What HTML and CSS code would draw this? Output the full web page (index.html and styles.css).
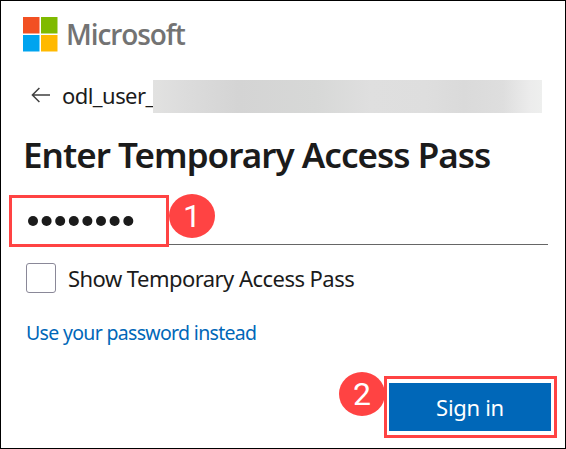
FILE: index.html
```html
<!DOCTYPE html>
<html lang="en">
<head>
<meta charset="utf-8">
<title>Enter Temporary Access Pass</title>
<link rel="stylesheet" href="styles.css">
</head>
<body>
<main class="card">
  <div class="brand">
    <svg class="brand-mark" viewBox="0 0 35 35" aria-hidden="true">
      <path fill="#f25022" d="M0 0h16.5v16.5H0z"/>
      <path fill="#7fba00" d="M18 0h16.5v16.5H18z"/>
      <path fill="#00a4ef" d="M0 18h16.5v16.5H0z"/>
      <path fill="#ffb900" d="M18 18h16.5v16.5H18z"/>
    </svg>
    <span class="brand-name">Microsoft</span>
  </div>
  <div class="identity">
    <svg class="back" viewBox="0 0 20 16" aria-hidden="true">
      <path d="M8.4 1 1.4 8l7 7M1.4 8H19" fill="none" stroke="#404040" stroke-width="1.5"/>
    </svg>
    <span class="user">odl_user_</span>
    <span class="redacted"></span>
  </div>
  <h1 class="title">Enter Temporary Access Pass</h1>
  <div class="field">
    <div class="highlight">
      <svg class="dots" viewBox="0 0 106 10" aria-label="Password">
        <g fill="#1b1b1b">
          <circle cx="5" cy="5" r="5"/><circle cx="18.6" cy="5" r="5"/>
          <circle cx="32.2" cy="5" r="5"/><circle cx="45.8" cy="5" r="5"/>
          <circle cx="59.4" cy="5" r="5"/><circle cx="73" cy="5" r="5"/>
          <circle cx="86.6" cy="5" r="5"/><circle cx="100.3" cy="5" r="5"/>
        </g>
      </svg>
    </div>
    <span class="badge">1</span>
  </div>
  <label class="show"><span class="box"></span><span class="show-text">Show Temporary Access Pass</span></label>
  <a class="link">Use your password instead</a>
  <div class="actions">
    <span class="badge">2</span>
    <div class="highlight-button"><button class="submit">Sign in</button></div>
  </div>
</main>
</body>
</html>
```
FILE: styles.css
```css
* { box-sizing: border-box; }
body {
  margin: 0;
  font-family: "Noto Sans", "Open Sans", sans-serif;
  color: #1b1b1b;
  background: #fff;
}
.card {
  width: 566px;
  height: 449px;
  border: 1px solid #000;
  padding-top: 16px;
  display: flex;
  flex-direction: column;
  white-space: nowrap;
}
.brand {
  display: flex;
  height: 35px;
  margin-left: 22px;
}
.brand-mark { width: 35px; height: 35px; }
.brand-name {
  margin-left: 8px;
  font-family: "Open Sans", sans-serif;
  font-size: 28px;
  font-weight: 600;
  line-height: 35px;
  letter-spacing: -1.1px;
  color: #737373;
}
.identity {
  display: flex;
  align-items: center;
  height: 33px;
  margin: 28px 0 0 30px;
}
.back { width: 20px; height: 16px; margin-top: -3px; }
.user {
  width: 91px;
  margin-left: 11px;
  font-size: 22px;
  line-height: 31px;
  height: 33px;
  letter-spacing: -0.55px;
}
.redacted {
  width: 389px;
  height: 33px;
  background: linear-gradient(90deg, #e2e2e1 0, #dcdcdc 8%, #d4d4d4 22%, #d7d8d7 42%, #dfdfdf 56%, #dedede 70%, #dadada 80%, #dedede 90%, #ececec 97%, #eeefee 100%);
}
.title {
  margin: 17px 0 0 22px;
  font-size: 35px;
  font-weight: 600;
  line-height: 50px;
  letter-spacing: -0.97px;
}
.field {
  display: flex;
  height: 53px;
  margin: 14px 17px 0 8px;
  background: linear-gradient(#666, #666) 0 50px / 100% 1px no-repeat;
}
.highlight {
  width: 160px;
  height: 52px;
  margin-top: 1px;
  border: 3px solid #ff4343;
  background: #fff;
  padding: 18px 0 0 16px;
}
.dots { display: block; width: 106px; height: 10px; }
.badge {
  width: 46px;
  height: 44px;
  border-radius: 50%;
  background: #ff4343;
  color: #fff;
  font: 32px/45px Roboto, sans-serif;
  text-align: center;
}
.show {
  display: flex;
  align-items: center;
  height: 30px;
  margin: 16px 0 0 25px;
}
.box {
  width: 30px;
  height: 30px;
  border: 1px solid #8a8898;
  border-radius: 3px;
}
.show-text {
  margin-left: 12px;
  font-size: 22px;
  letter-spacing: -0.54px;
}
.link {
  margin: 25px 0 0 25px;
  font-size: 19.5px;
  line-height: 30px;
  letter-spacing: -0.68px;
  color: #0067b8;
}
.actions {
  display: flex;
  margin: 24px 0 0 338px;
}
.highlight-button {
  width: 173px;
  height: 62px;
  margin-top: 4px;
  margin-left: -1px;
  border: 3px solid #ff4343;
  padding: 4px 0 0 2px;
}
.submit {
  display: block;
  width: 162px;
  height: 48px;
  border: 0;
  padding: 0;
  background: #0067b8;
  color: #fff;
  font: 22px/48px "Noto Sans", sans-serif;
  letter-spacing: -0.3px;
}
```
